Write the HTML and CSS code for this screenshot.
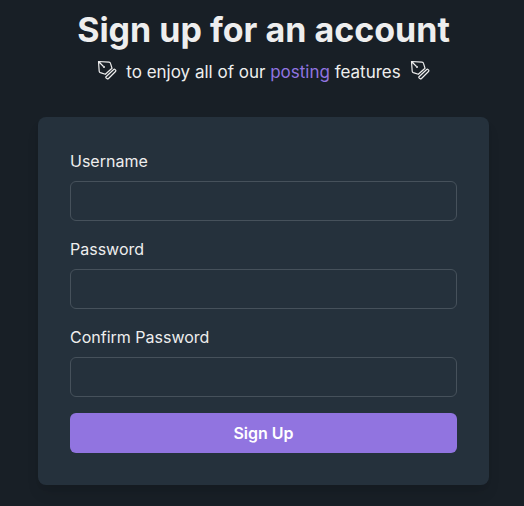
FILE: index.html
```html
<!DOCTYPE html>
<html lang="en">
<head>
<meta charset="utf-8">
<meta name="viewport" content="width=device-width, initial-scale=1">
<title>Sign up</title>
<link rel="stylesheet" href="styles.css">
</head>
<body>
<main class="page">
  <header class="intro">
    <h1 class="title">Sign up for an account</h1>
    <div class="tagline">
      <svg class="pen" viewBox="0 0 20 20" aria-hidden="true"><path d="M1.500 1.500 12 2.200Q13.200 2.300 13.500 3.400L15 8.200 8.300 14.300 3.300 12.600Q2.300 12.200 2.200 11.200ZM1.500 1.500 6.500 6.500M9 16.700 16.700 9.500Q17.400 8.900 18.100 9.600L18.600 10.100Q19.200 10.800 18.500 11.500L11.500 18.500Q10.700 19.200 10 18.500L9.100 17.900Q8.500 17.300 9 16.700Z"/><circle cx="7" cy="7" r="1"/></svg>
      <p class="text">to enjoy all of our <a class="link" href="#">posting</a> features</p>
      <svg class="pen" viewBox="0 0 20 20" aria-hidden="true"><path d="M1.500 1.500 12 2.200Q13.200 2.300 13.500 3.400L15 8.200 8.300 14.300 3.300 12.600Q2.300 12.200 2.200 11.200ZM1.500 1.500 6.500 6.500M9 16.700 16.700 9.500Q17.400 8.900 18.100 9.600L18.600 10.100Q19.200 10.800 18.500 11.500L11.500 18.500Q10.700 19.200 10 18.500L9.100 17.900Q8.500 17.300 9 16.700Z"/><circle cx="7" cy="7" r="1"/></svg>
    </div>
  </header>
  <form class="card">
    <div class="field">
      <label for="username">Username</label>
      <input id="username" type="text">
    </div>
    <div class="field">
      <label for="password">Password</label>
      <input id="password" type="password">
    </div>
    <div class="field">
      <label for="confirm">Confirm Password</label>
      <input id="confirm" type="password">
    </div>
    <button class="submit" type="button">Sign Up</button>
  </form>
</main>
</body>
</html>
```
FILE: styles.css
```css
* {
  box-sizing: border-box;
}

body {
  margin: 0;
  background: #181f26;
  color: #eeeeee;
  font-family: Inter, "Liberation Sans", sans-serif;
  font-size: 16px;
  line-height: 24px;
}

.page {
  display: flex;
  flex-direction: column;
  gap: 31px;
  padding: 8px 35px 21px 38px;
}

.intro {
  display: flex;
  flex-direction: column;
  align-items: center;
  gap: 7px;
}

.title {
  margin: 0;
  font-size: 34px;
  font-weight: 700;
  line-height: 44px;
}

.tagline {
  display: flex;
  align-items: center;
  gap: 9px;
}

.pen {
  width: 20px;
  height: 20px;
  margin-bottom: 5px;
  fill: none;
  stroke: currentColor;
  stroke-width: 1.2;
  stroke-linejoin: round;
}

.pen circle {
  fill: currentColor;
  stroke: none;
}

.text {
  margin: 0;
  font-size: 17px;
  line-height: 27px;
}

.link {
  color: #9174e0;
  text-decoration: none;
}

.card {
  display: flex;
  flex-direction: column;
  gap: 16px;
  padding: 32px;
  border-radius: 8px;
  background: #25313c;
  box-shadow: 0 10px 15px -3px rgba(0, 0, 0, 0.1), 0 4px 6px -2px rgba(0, 0, 0, 0.05);
}

.field {
  display: flex;
  flex-direction: column;
  gap: 8px;
}

.field input {
  width: 100%;
  height: 40px;
  padding: 0 16px;
  border: 1px solid #46515b;
  border-radius: 6px;
  background: transparent;
  color: inherit;
  font: inherit;
}

.submit {
  height: 40px;
  border: 0;
  border-radius: 6px;
  background: #9174e0;
  color: #ffffff;
  font: inherit;
  font-weight: 600;
}
```
